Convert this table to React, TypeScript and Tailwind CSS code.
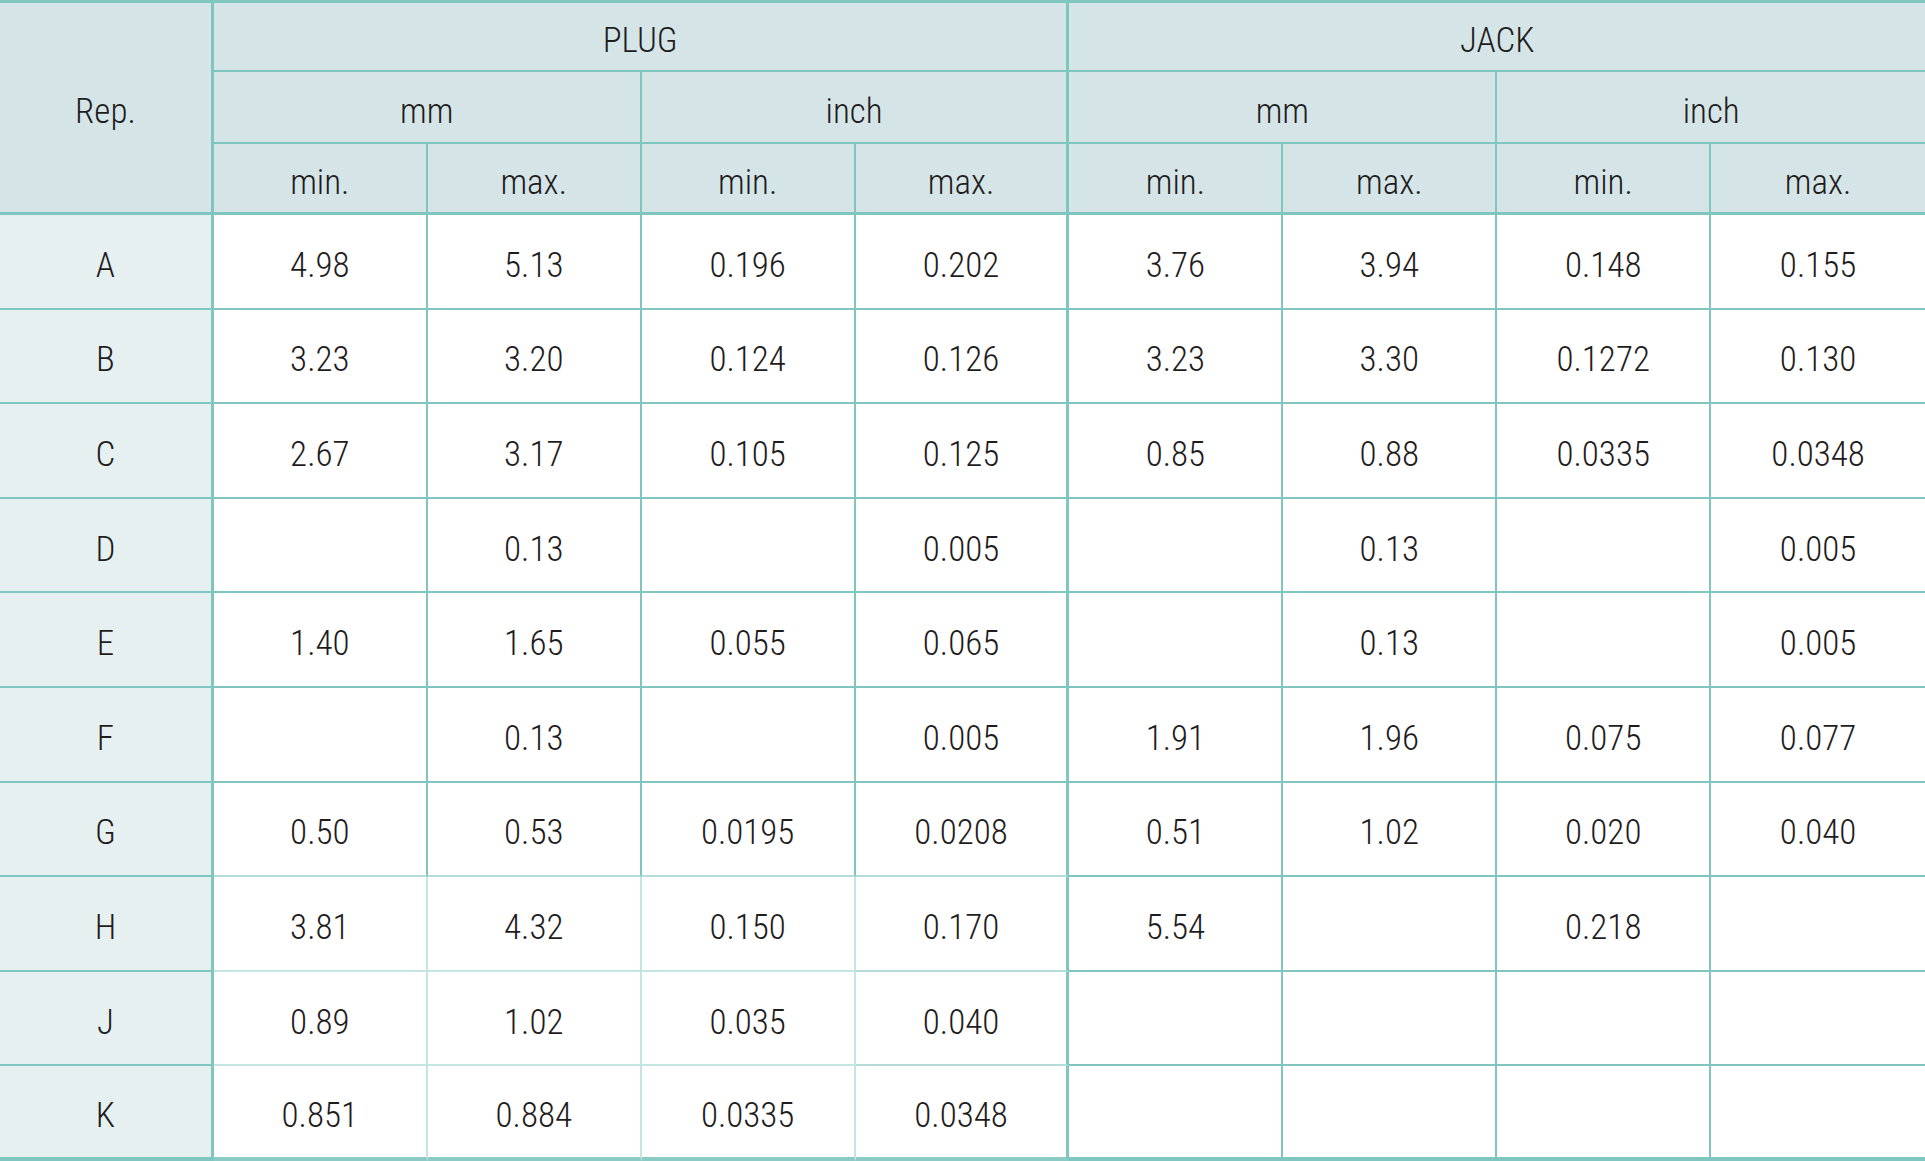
import React from 'react';

// connector dimension table: plug vs jack, mm and inch
type Row = { rep: string; vals: string[] };

const ROWS: Row[] = [
  { rep: 'A', vals: ['4.98', '5.13', '0.196', '0.202', '3.76', '3.94', '0.148', '0.155'] },
  { rep: 'B', vals: ['3.23', '3.20', '0.124', '0.126', '3.23', '3.30', '0.1272', '0.130'] },
  { rep: 'C', vals: ['2.67', '3.17', '0.105', '0.125', '0.85', '0.88', '0.0335', '0.0348'] },
  { rep: 'D', vals: ['', '0.13', '', '0.005', '', '0.13', '', '0.005'] },
  { rep: 'E', vals: ['1.40', '1.65', '0.055', '0.065', '', '0.13', '', '0.005'] },
  { rep: 'F', vals: ['', '0.13', '', '0.005', '1.91', '1.96', '0.075', '0.077'] },
  { rep: 'G', vals: ['0.50', '0.53', '0.0195', '0.0208', '0.51', '1.02', '0.020', '0.040'] },
  { rep: 'H', vals: ['3.81', '4.32', '0.150', '0.170', '5.54', '', '0.218', ''] },
  { rep: 'J', vals: ['0.89', '1.02', '0.035', '0.040', '', '', '', ''] },
  { rep: 'K', vals: ['0.851', '0.884', '0.0335', '0.0348', '', '', '', ''] },
];

const SUB = ['min.', 'max.', 'min.', 'max.', 'min.', 'max.', 'min.', 'max.'];

export default function App() {
  const head = 'bg-[#d5e5e7] text-center align-middle font-light pt-[8px] border-[#80c6c0]';

  return (
    <div className="w-[1925px] h-[1161px] bg-white text-[#1f1c1d] text-[35px] font-light font-['Liberation_Sans_Narrow','Roboto_Condensed','Liberation_Sans',sans-serif] leading-none">
      <table className="w-full table-fixed border-separate border-spacing-0">
        <colgroup>
          {Array.from({ length: 9 }).map((_, i) => (
            <col key={i} className="w-[213.9px]" />
          ))}
        </colgroup>
        <thead>
          <tr className="h-[72px]">
            <th rowSpan={3} className={`${head} border-t-[3px] border-r-[3px] border-b-[3px]`}>
              Rep.
            </th>
            <th colSpan={4} className={`${head} border-t-[3px] border-r-[3px] border-b-2`}>
              PLUG
            </th>
            <th colSpan={4} className={`${head} border-t-[3px] border-b-2`}>
              JACK
            </th>
          </tr>
          <tr className="h-[72px]">
            <th colSpan={2} className={`${head} border-r-2 border-b-2`}>mm</th>
            <th colSpan={2} className={`${head} border-r-[3px] border-b-2`}>inch</th>
            <th colSpan={2} className={`${head} border-r-2 border-b-2`}>mm</th>
            <th colSpan={2} className={`${head} border-b-2`}>inch</th>
          </tr>
          <tr className="h-[71px]">
            {SUB.map((s, i) => (
              <th
                key={i}
                className={`${head} border-b-[3px] ${i === 3 ? 'border-r-[3px]' : i === 7 ? '' : 'border-r-2'}`}
              >
                {s}
              </th>
            ))}
          </tr>
        </thead>
        <tbody>
          {ROWS.map((r, ri) => {
            const last = ri === ROWS.length - 1;
            const pale = ri >= 6;
            return (
              <tr key={r.rep} className="h-[94.6px]">
                <td
                  className={`bg-[#e6f0f0] text-center align-middle pt-[8px] border-r-[3px] border-[#80c6c0] ${
                    last ? 'border-b-4' : 'border-b-2'
                  }`}
                >
                  {r.rep}
                </td>
                {r.vals.map((v, ci) => {
                  const plug = ci < 4;
                  const right = ci === 3 ? 'border-r-[3px]' : ci === 7 ? '' : 'border-r-2';
                  const color =
                    plug && pale && ci !== 3
                      ? last
                        ? 'border-r-[#c4e6e3] border-b-[#8ccac4]'
                        : ri === 6
                        ? 'border-r-[#80c6c0] border-b-[#b4ddd9]'
                        : 'border-[#c4e6e3]'
                      : plug && pale && ci === 3
                      ? last
                        ? 'border-r-[#80c6c0] border-b-[#8ccac4]'
                        : 'border-r-[#80c6c0] border-b-[#b4ddd9]'
                      : 'border-[#80c6c0]';
                  return (
                    <td
                      key={ci}
                      className={`bg-white text-center align-middle pt-[8px] ${right} ${
                        last ? 'border-b-4' : 'border-b-2'
                      } ${color}`}
                    >
                      {v}
                    </td>
                  );
                })}
              </tr>
            );
          })}
        </tbody>
      </table>
    </div>
  );
}
